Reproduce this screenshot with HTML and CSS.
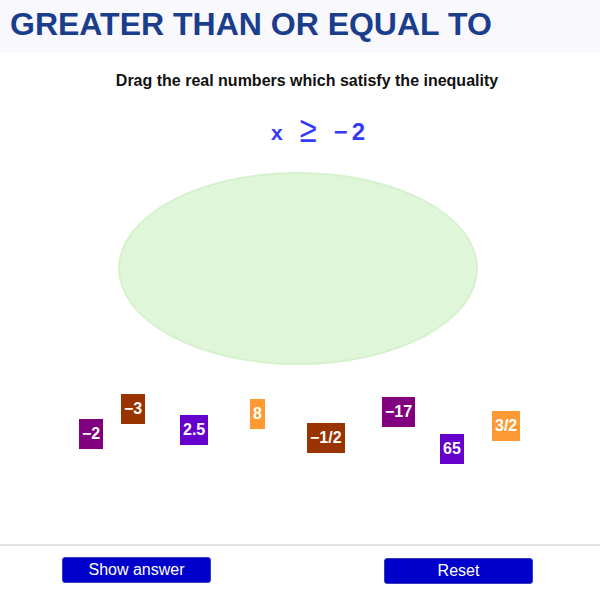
FILE: index.html
```html
<!DOCTYPE html>
<html lang="en">
<head>
  <meta charset="UTF-8">
  <meta name="viewport" content="width=device-width, initial-scale=1.0">
  <title>Greater Than or Equal To</title>
  <link rel="stylesheet" href="styles.css">
</head>
<body>
  <div class="header">
    <h1>GREATER THAN OR EQUAL TO</h1>
  </div>

  <div class="board">
    <p class="prompt">Drag the real numbers which satisfy the inequality</p>
    <div class="inequality">
      <span class="var">x</span>
      <span class="sign">&ge;</span>
      <span class="value">&minus;2</span>
    </div>
    <div class="dropzone"></div>

    <div class="tile purple" style="left: 79px; top: 366px;">&minus;2</div>
    <div class="tile brown" style="left: 121px; top: 341px;">&minus;3</div>
    <div class="tile violet" style="left: 180px; top: 362px;">2.5</div>
    <div class="tile orange" style="left: 250px; top: 346px;">8</div>
    <div class="tile brown" style="left: 307px; top: 370px;">&minus;1/2</div>
    <div class="tile purple" style="left: 382px; top: 344px;">&minus;17</div>
    <div class="tile violet" style="left: 440px; top: 381px;">65</div>
    <div class="tile orange" style="left: 492px; top: 358px;">3/2</div>
  </div>

  <div class="footer">
    <button class="btn" id="showBtn">Show answer</button>
    <button class="btn reset" id="resetBtn">Reset</button>
  </div>
</body>
</html>
```

FILE: styles.css
```css
body {
  margin: 0;
  font-family: "Liberation Sans", Arial, sans-serif;
  background-color: #fff;
}
.header {
  background-color: #f8f8fd;
  height: 53px;
  box-sizing: border-box;
  padding: 6px 0 0 10px;
}
h1 {
  margin: 0;
  font-size: 32px;
  line-height: 37px;
  color: #1a3d8c;
  font-weight: bold;
}
.board {
  position: relative;
  height: 491px;
}
.prompt {
  margin: 0;
  padding: 19px 0 0 14px;
  text-align: center;
  font-size: 16px;
  line-height: 18px;
  font-weight: bold;
  color: #111;
}
.inequality {
  display: flex;
  justify-content: center;
  align-items: baseline;
  gap: 17px;
  margin-top: 28px;
  padding-left: 40px;
  height: 24px;
  line-height: 24px;
  color: #3838f8;
  font-size: 21px;
  font-weight: bold;
}
.inequality .sign {
  display: inline-block;
  font-weight: normal;
  font-size: 31px;
  transform: scaleY(1.2);
  vertical-align: -3px;
}
.inequality .value {
  font-size: 24px;
  letter-spacing: 4px;
}
.dropzone {
  width: 356px;
  height: 189px;
  margin: 30px 0 0 118px;
  border: 2px solid #d6f1cd;
  border-radius: 50%;
  background-color: #e0f6d9;
}
.tile {
  position: absolute;
  padding: 0 3px;
  height: 30px;
  line-height: 30px;
  color: #fff;
  font-size: 16px;
  font-weight: bold;
  cursor: move;
}
.purple {
  background-color: #800080;
}
.brown {
  background-color: #993300;
}
.violet {
  background-color: #6600cc;
}
.orange {
  background-color: #ff9933;
}
.footer {
  border-top: 2px solid #e2e2e2;
  padding: 11px 0 0 62px;
  display: flex;
  gap: 173px;
}
.btn {
  width: 149px;
  height: 26px;
  padding: 0;
  border: 1px solid #3b3bb8;
  border-radius: 3px;
  background-color: #0000cc;
  color: #fff;
  font-family: "Liberation Sans", Arial, sans-serif;
  font-size: 16px;
  cursor: pointer;
}
.reset {
  margin-top: 1px;
}
```
